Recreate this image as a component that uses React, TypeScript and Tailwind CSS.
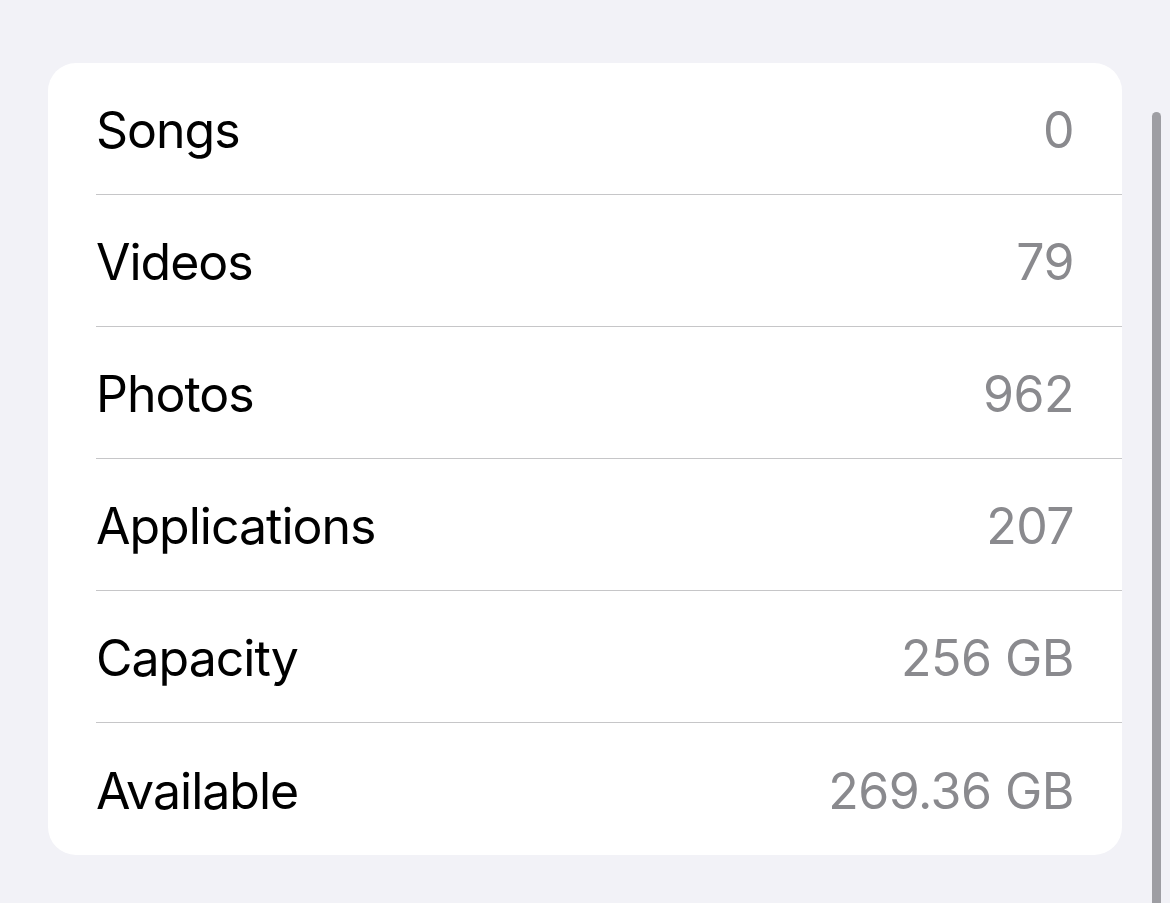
const rows = [
  { label: "Songs", value: "0" },
  { label: "Videos", value: "79" },
  { label: "Photos", value: "962" },
  { label: "Applications", value: "207" },
  { label: "Capacity", value: "256 GB" },
  { label: "Available", value: "269.36 GB" },
];

export default function App() {
  return (
    <div
      className="relative h-[903px] w-[1170px] overflow-hidden bg-[#f2f2f7] pl-[48px] pt-[63px]"
      style={{ fontFamily: "Inter, 'Liberation Sans', sans-serif" }}
    >
      <div className="w-[1074px] overflow-hidden rounded-[28px] bg-white pl-[48px]">
        {rows.map((row, i) => (
          <div
            key={row.label}
            className={`flex h-[132px] items-center justify-between pr-[48px] pt-[3px] ${
              i < rows.length - 1 ? "border-b border-[#c6c6c8]" : ""
            }`}
          >
            <span className="text-[50px] leading-none tracking-[-1px] text-black">{row.label}</span>
            <span className="text-[50px] leading-none tracking-[-0.5px] text-[#8a8a8e]">{row.value}</span>
          </div>
        ))}
      </div>

      {/* scroll indicator */}
      <div className="absolute left-[1152px] top-[112px] h-[820px] w-[9px] rounded-full bg-[#9e9ea3]" />
    </div>
  );
}
